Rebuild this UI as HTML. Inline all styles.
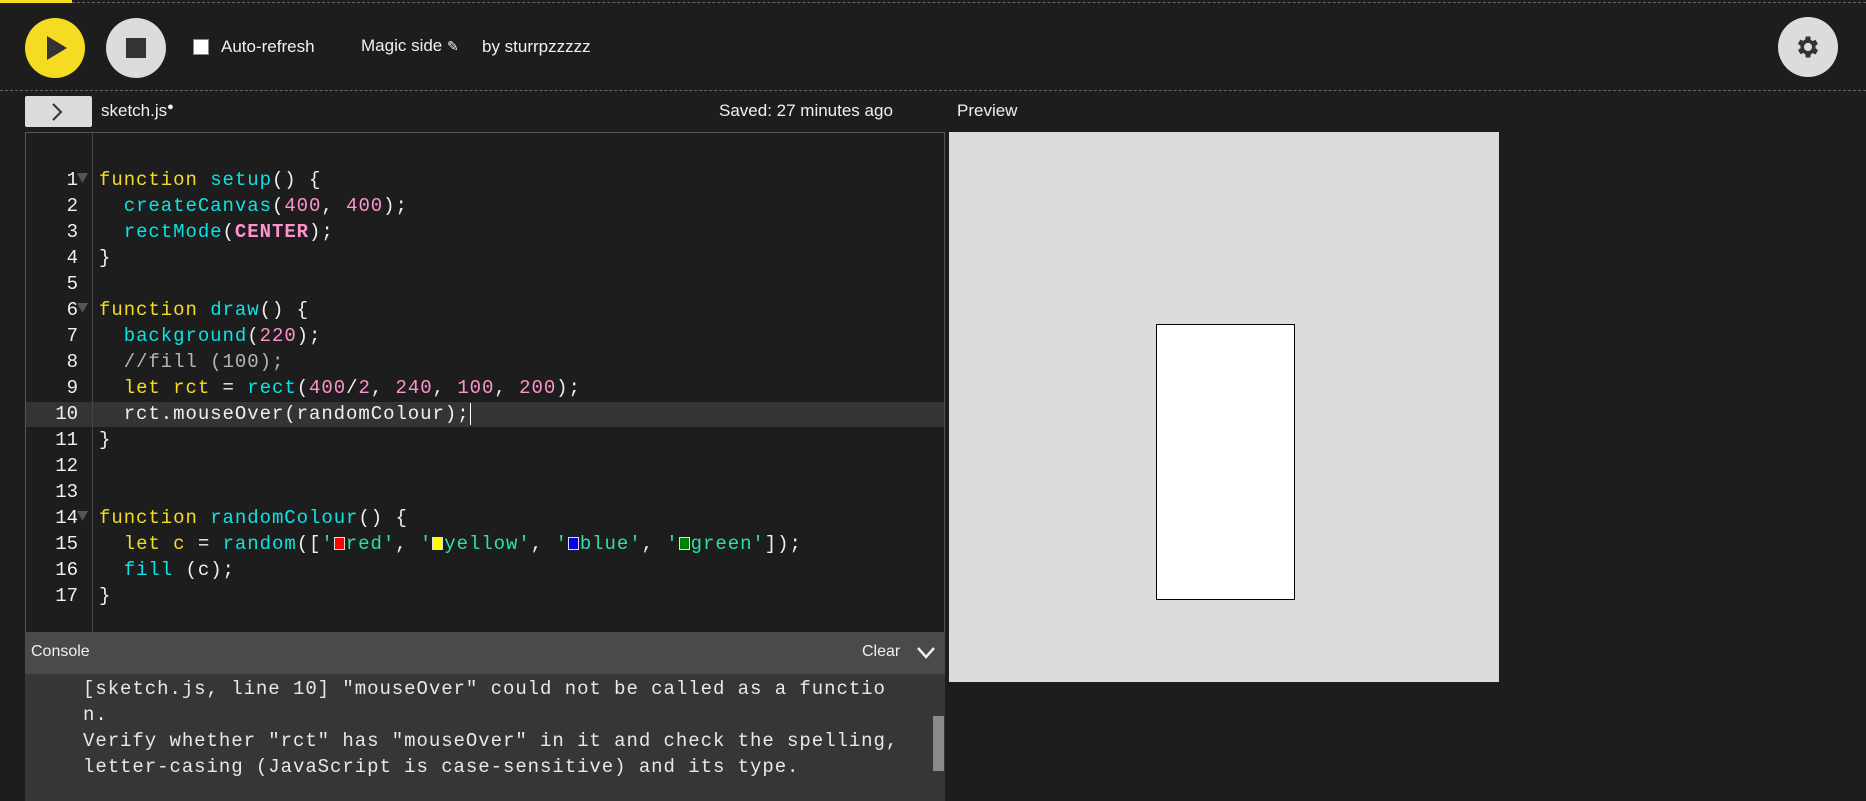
<!DOCTYPE html>
<html><head><style>
*{margin:0;padding:0;box-sizing:border-box}
body{width:1866px;height:801px;background:#1d1d1d;position:relative;overflow:hidden;font-family:"Liberation Sans",sans-serif;color:#f0f0f0}
.a{position:absolute}
.ui{font-size:17px}
.code{font-family:"Liberation Mono",monospace;font-size:19px;letter-spacing:0.95px;white-space:pre;line-height:26px}
.k{color:#f5dc23}.f{color:#0ce3e3}.n{color:#ff93cc}.w{color:#f0f0f0}.g{color:#b5b5b5}.s{color:#2de0a7}
.sq{display:inline-block;width:11px;height:13px;border:1px solid #ddd;vertical-align:-1px;margin-right:1px}
</style></head><body>
<div class="a" style="left:0;top:0;width:72px;height:3px;background:#f5dc23"></div>
<div class="a" style="left:72px;top:2px;width:1794px;border-top:1px dashed #666"></div>
<div class="a" style="left:0;top:90px;width:1866px;border-top:1px dashed #666"></div>
<div class="a" style="left:25px;top:18px;width:60px;height:60px;border-radius:50%;background:#f5dc23"></div>
<svg class="a" style="left:45px;top:35px" width="24" height="26"><polygon points="2,1 22,13 2,25" fill="#333"/></svg>
<div class="a" style="left:106px;top:18px;width:60px;height:60px;border-radius:50%;background:#dcdcdc"></div>
<div class="a" style="left:126px;top:38px;width:20px;height:20px;background:#333"></div>
<div class="a" style="left:193px;top:39px;width:16px;height:16px;background:#fff;border:1px solid #888"></div>
<div class="a ui" style="left:221px;top:37px">Auto-refresh</div>
<div class="a ui" style="left:361px;top:36px">Magic side <span style="font-size:14px">✎</span></div>
<div class="a ui" style="left:482px;top:37px">by sturrpzzzzz</div>
<div class="a" style="left:1778px;top:17px;width:60px;height:60px;border-radius:50%;background:#dcdcdc"></div>
<svg class="a" style="left:1794px;top:33px" width="28" height="28" viewBox="0 0 24 24"><path fill="#333" d="M19.4 13a7.5 7.5 0 0 0 0-2l2.1-1.6-2-3.5-2.5 1a7 7 0 0 0-1.7-1L15 3h-4l-.4 2.7a7 7 0 0 0-1.7 1l-2.5-1-2 3.5L6.6 11a7.5 7.5 0 0 0 0 2l-2.1 1.6 2 3.5 2.5-1a7 7 0 0 0 1.7 1L11 21h4l.4-2.7a7 7 0 0 0 1.7-1l2.5 1 2-3.5zM13 15.5a3.5 3.5 0 1 1 0-7 3.5 3.5 0 0 1 0 7z" transform="translate(-1 0)"/></svg>
<div class="a" style="left:25px;top:96px;width:67px;height:31px;background:#dcdcdc;border-radius:2px"></div>
<svg class="a" style="left:50px;top:102px" width="14" height="20"><polyline points="3,2 11,10 3,18" fill="none" stroke="#333" stroke-width="2"/></svg>
<div class="a ui" style="left:101px;top:101px">sketch.js<span style="font-size:11px;vertical-align:6px">●</span></div>
<div class="a ui" style="left:719px;top:101px">Saved: 27 minutes ago</div>
<div class="a ui" style="left:957px;top:101px">Preview</div>
<div class="a" style="left:25px;top:132px;width:920px;height:500px;border:1px solid #555;border-bottom:none;background:#1d1d1d"></div>
<div class="a" style="left:26px;top:402px;width:918px;height:25px;background:#343434"></div>
<div class="a" style="left:92px;top:133px;height:499px;border-left:1px solid #444"></div>
<div class="a code" style="left:26px;top:167px;width:52px;text-align:right;color:#f0f0f0;letter-spacing:0">1
2
3
4
5
6
7
8
9
10
11
12
13
14
15
16
17</div>
<svg class="a" style="left:77px;top:172px" width="12" height="12"><polygon points="0,1 11,1 5.5,11" fill="#555"/></svg>
<svg class="a" style="left:77px;top:302px" width="12" height="12"><polygon points="0,1 11,1 5.5,11" fill="#555"/></svg>
<svg class="a" style="left:77px;top:510px" width="12" height="12"><polygon points="0,1 11,1 5.5,11" fill="#555"/></svg>
<div class="a code w" style="left:99px;top:167px"><span class="k">function</span> <span class="f">setup</span>() {
  <span class="f">createCanvas</span>(<span class="n">400</span>, <span class="n">400</span>);
  <span class="f">rectMode</span>(<b class="n">CENTER</b>);
}

<span class="k">function</span> <span class="f">draw</span>() {
  <span class="f">background</span>(<span class="n">220</span>);
  <span class="g">//fill (100);</span>
  <span class="k">let</span> <span class="k">rct</span> = <span class="f">rect</span>(<span class="n">400</span>/<span class="n">2</span>, <span class="n">240</span>, <span class="n">100</span>, <span class="n">200</span>);
  rct.mouseOver(randomColour);<span style="border-left:1px solid #fff"></span>
}


<span class="k">function</span> <span class="f">randomColour</span>() {
  <span class="k">let</span> <span class="k">c</span> = <span class="f">random</span>([<span class="s">'<i class="sq" style="background:red"></i>red'</span>, <span class="s">'<i class="sq" style="background:#ff0"></i>yellow'</span>, <span class="s">'<i class="sq" style="background:#00f"></i>blue'</span>, <span class="s">'<i class="sq" style="background:green"></i>green'</span>]);
  <span class="f">fill</span> (c);
}</div>
<div class="a" style="left:25px;top:632px;width:920px;height:42px;background:#4a4a4a"></div>
<div class="a" style="left:31px;top:643px;font-size:16px">Console</div>
<div class="a" style="left:862px;top:643px;font-size:16px">Clear</div>
<svg class="a" style="left:916px;top:645px" width="20" height="16"><polyline points="2,3 10,12 18,3" fill="none" stroke="#eee" stroke-width="2.5"/></svg>
<div class="a" style="left:25px;top:674px;width:920px;height:127px;background:#363636"></div>
<div class="a code" style="left:83px;top:676px;color:#e8e8e8">[sketch.js, line 10] "mouseOver" could not be called as a functio
n.
Verify whether "rct" has "mouseOver" in it and check the spelling,
letter-casing (JavaScript is case-sensitive) and its type.</div>
<div class="a" style="left:933px;top:716px;width:11px;height:55px;background:#8a8a8a"></div>
<div class="a" style="left:949px;top:132px;width:550px;height:550px;background:#dcdcdc"></div>
<div class="a" style="left:1156px;top:324px;width:139px;height:276px;background:#fff;border:1px solid #000"></div>
</body></html>
